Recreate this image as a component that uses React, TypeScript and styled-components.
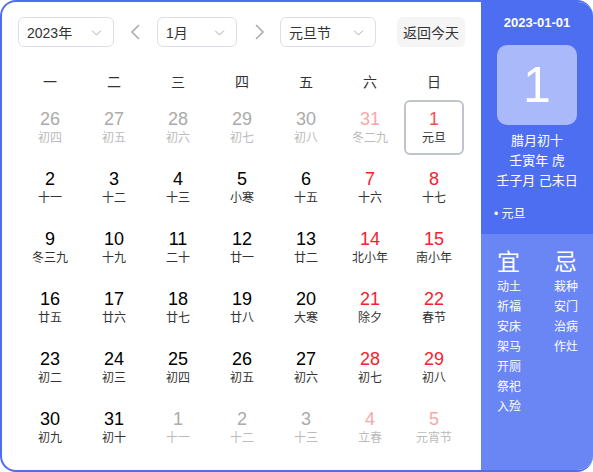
import styled, { createGlobalStyle } from 'styled-components';

const GlobalStyle = createGlobalStyle`
  html, body {
    margin: 0;
    padding: 0;
    background: #fff;
  }
  body {
    font-family: "Liberation Sans", "Noto Sans CJK SC", sans-serif;
  }
`;

const Frame = styled.div`
  width: 593px;
  height: 472px;
  box-sizing: border-box;
  border: 2px solid #4e6ef2;
  border-right: none;
  border-radius: 16px;
  overflow: hidden;
  display: flex;
  background: #fff;
`;

const Main = styled.div`
  width: 479px;
  flex-shrink: 0;
  box-sizing: border-box;
  padding: 15px 0 0 16px;
  display: flex;
  flex-direction: column;
`;

const Toolbar = styled.div`
  display: flex;
  align-items: center;
  height: 30px;
`;

const Select = styled.div<{ $w: number }>`
  width: ${(p) => p.$w}px;
  height: 30px;
  box-sizing: border-box;
  border: 1px solid #dcdfe6;
  border-radius: 6px;
  display: flex;
  align-items: center;
  justify-content: space-between;
  padding: 0 9px 0 8px;
  font-size: 14px;
  color: #333;
`;

const Chevron = styled.svg`
  width: 15px;
  height: 15px;
  color: #a8abb2;
`;

const NavArrow = styled.div`
  width: 43px;
  display: flex;
  justify-content: center;
  color: #a8abb2;
`;

const TodayButton = styled.div`
  margin-left: 21px;
  width: 68px;
  height: 30px;
  border-radius: 6px;
  background: #f5f5f5;
  color: #333;
  font-size: 14px;
  display: flex;
  align-items: center;
  justify-content: center;
`;

const Grid = styled.div`
  display: grid;
  grid-template-columns: repeat(7, 64px);
  grid-template-rows: 53px;
  grid-auto-rows: 60px;
`;

const WeekHead = styled.div`
  display: flex;
  align-items: center;
  justify-content: center;
  padding-top: 14px;
  box-sizing: border-box;
  font-size: 14px;
  color: #333;
`;

const Cell = styled.div<{ $sel?: boolean }>`
  width: 60px;
  height: 55px;
  box-sizing: border-box;
  margin: 0 2px;
  border: 2px solid ${(p) => (p.$sel ? '#c0c4cc' : 'transparent')};
  border-radius: 6px;
  display: flex;
  flex-direction: column;
  align-items: center;
  justify-content: center;
`;

const DayNum = styled.div<{ $color: string }>`
  font-size: 18px;
  line-height: 20px;
  color: ${(p) => p.$color};
`;

const Lunar = styled.div<{ $color: string }>`
  font-size: 12px;
  line-height: 17px;
  margin-top: 1px;
  color: ${(p) => p.$color};
`;

const Side = styled.div`
  flex: 1;
  display: flex;
  flex-direction: column;
  color: #fff;
  margin: -2px 0;
`;

const SideTop = styled.div`
  background: #4e6ef2;
  height: 234px;
  display: flex;
  flex-direction: column;
  align-items: center;
  padding-top: 14px;
  box-sizing: border-box;
`;

const DateText = styled.div`
  font-size: 13px;
  line-height: 18px;
  font-weight: bold;
`;

const BigDay = styled.div`
  margin-top: 13px;
  width: 80px;
  height: 80px;
  border-radius: 10px;
  background: #a9b9fa;
  display: flex;
  align-items: center;
  justify-content: center;
  font-size: 50px;
  font-family: "Liberation Sans", sans-serif;
`;

const InfoLine = styled.div`
  font-size: 13px;
  line-height: 20px;
`;

const InfoBlock = styled.div`
  margin-top: 6px;
  display: flex;
  flex-direction: column;
  align-items: center;
`;

const Festival = styled.div`
  align-self: stretch;
  padding-left: 13px;
  margin-top: 13px;
  font-size: 12px;
`;

const SideBottom = styled.div`
  flex: 1;
  background: #6a85f4;
  display: flex;
  gap: 33px;
  padding: 14px 0 0 16px;
`;

const Column = styled.div`
  display: flex;
  flex-direction: column;
  width: 24px;
`;

const ColTitle = styled.div`
  font-size: 23px;
  line-height: 28px;
  margin-bottom: 1px;
`;

const ColItem = styled.div`
  font-size: 12px;
  line-height: 20px;
  white-space: nowrap;
`;

const ChevronDown = () => (
  <Chevron viewBox="0 0 24 24" fill="none" stroke="currentColor" strokeWidth="1.6">
    <path d="M5 9l7 7 7-7" />
  </Chevron>
);

type Day = { n: number; l: string; other?: boolean; sel?: boolean };

const lunar = [
  '初四 初五 初六 初七 初八 冬二九 元旦',
  '十一 十二 十三 小寒 十五 十六 十七',
  '冬三九 十九 二十 廿一 廿二 北小年 南小年',
  '廿五 廿六 廿七 廿八 大寒 除夕 春节',
  '初二 初三 初四 初五 初六 初七 初八',
  '初九 初十 十一 十二 十三 立春 元宵节',
].flatMap((r) => r.split(' '));

const days: Day[] = [];
[26, 27, 28, 29, 30, 31].forEach((n) => days.push({ n, l: '', other: true }));
for (let n = 1; n <= 31; n++) days.push({ n, l: '', sel: n === 1 });
[1, 2, 3, 4, 5].forEach((n) => days.push({ n, l: '', other: true }));
days.forEach((d, i) => (d.l = lunar[i]));

const weeks = ['一', '二', '三', '四', '五', '六', '日'];
const yi = ['动土', '祈福', '安床', '架马', '开厕', '祭祀', '入殓'];
const ji = ['栽种', '安门', '治病', '作灶'];

const App = () => {
  return (
    <>
      <GlobalStyle />
      <Frame>
        <Main>
          <Toolbar>
            <Select $w={96}>
              2023年
              <ChevronDown />
            </Select>
            <NavArrow>
              <svg width="16" height="18" viewBox="0 0 16 18" fill="none" stroke="currentColor" strokeWidth="1.6">
                <path d="M11 2L4 9l7 7" />
              </svg>
            </NavArrow>
            <Select $w={80}>
              1月
              <ChevronDown />
            </Select>
            <NavArrow>
              <svg width="16" height="18" viewBox="0 0 16 18" fill="none" stroke="currentColor" strokeWidth="1.6">
                <path d="M5 2l7 7-7 7" />
              </svg>
            </NavArrow>
            <Select $w={96}>
              元旦节
              <ChevronDown />
            </Select>
            <TodayButton>返回今天</TodayButton>
          </Toolbar>
          <Grid>
            {weeks.map((w) => (
              <WeekHead key={w}>{w}</WeekHead>
            ))}
            {days.map((d, i) => {
              const weekend = i % 7 >= 5;
              let num = weekend ? '#f5222d' : '#000';
              let lun = '#333';
              if (d.other) {
                num = weekend ? '#f9a8a8' : '#aaa';
                lun = '#bbb';
              }
              if (d.sel) num = '#ff4d4f';
              return (
                <Cell key={i} $sel={d.sel}>
                  <DayNum $color={num}>{d.n}</DayNum>
                  <Lunar $color={lun}>{d.l}</Lunar>
                </Cell>
              );
            })}
          </Grid>
        </Main>
        <Side>
          <SideTop>
            <DateText>2023-01-01</DateText>
            <BigDay>1</BigDay>
            <InfoBlock>
              <InfoLine>腊月初十</InfoLine>
              <InfoLine>壬寅年 虎</InfoLine>
              <InfoLine>壬子月 己未日</InfoLine>
            </InfoBlock>
            <Festival>• 元旦</Festival>
          </SideTop>
          <SideBottom>
            <Column>
              <ColTitle>宜</ColTitle>
              {yi.map((t) => (
                <ColItem key={t}>{t}</ColItem>
              ))}
            </Column>
            <Column>
              <ColTitle>忌</ColTitle>
              {ji.map((t) => (
                <ColItem key={t}>{t}</ColItem>
              ))}
            </Column>
          </SideBottom>
        </Side>
      </Frame>
    </>
  );
};

export default App;
